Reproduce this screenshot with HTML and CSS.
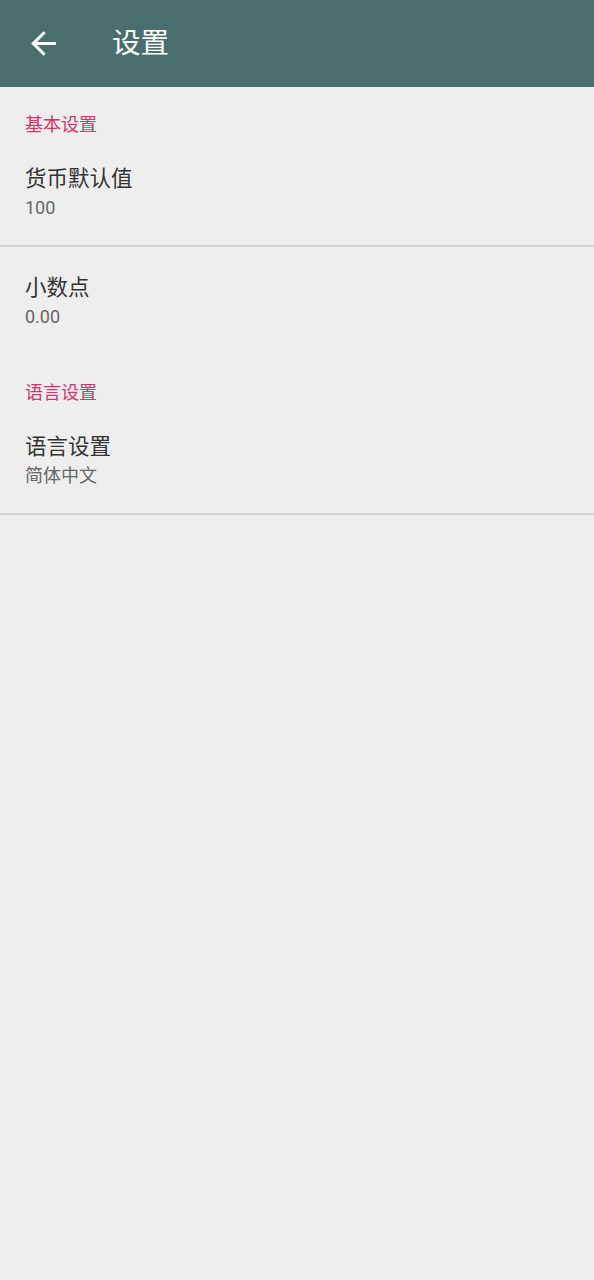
FILE: index.html
```html
<!DOCTYPE html>
<html lang="zh-CN">
<head>
<meta charset="utf-8">
<title>设置</title>
<link rel="stylesheet" href="styles.css">
</head>
<body>
<header class="toolbar">
  <svg class="back" viewBox="0 0 24 24" aria-hidden="true"><path d="M20 11H7.83l5.59-5.59L12 4l-8 8 8 8 1.41-1.41L7.83 13H20v-2z"/></svg>
  <h1 class="toolbar-title">设置</h1>
</header>
<main class="prefs">
  <section class="group">
    <div class="cat">基本设置</div>
    <div class="item">
      <div class="item-title">货币默认值</div>
      <div class="item-summary">100</div>
    </div>
    <div class="divider"></div>
    <div class="item">
      <div class="item-title">小数点</div>
      <div class="item-summary">0.00</div>
    </div>
  </section>
  <section class="group">
    <div class="cat">语言设置</div>
    <div class="item">
      <div class="item-title">语言设置</div>
      <div class="item-summary">简体中文</div>
    </div>
    <div class="divider"></div>
  </section>
</main>
</body>
</html>
```
FILE: styles.css
```css
html, body {
  margin: 0;
  padding: 0;
  background: #eeeeee;
  font-family: Roboto, "Noto Sans CJK SC", sans-serif;
}
body {
  min-height: 1280px;
}
.toolbar {
  height: 87px;
  background: #4a6e6d;
  display: flex;
  align-items: center;
  padding-left: 25px;
  box-sizing: border-box;
}
.back {
  width: 37px;
  height: 37px;
  fill: #ffffff;
  flex: none;
}
.toolbar-title {
  margin: 0 0 0 50px;
  font-size: 28.5px;
  font-weight: 400;
  color: #ffffff;
  line-height: 36px;
}
.group + .group {
  margin-top: 1px;
}
.cat {
  padding: 26px 25px 1px;
  font-size: 18px;
  line-height: 24px;
  color: #d6336c;
}
.item {
  padding: 27px 25px 25px;
}
.item-title {
  font-size: 21.5px;
  line-height: 28px;
  color: #333333;
}
.item-summary {
  margin-top: 3px;
  font-size: 18px;
  line-height: 24px;
  color: #666666;
}
.divider {
  height: 2px;
  background: #d4d4d4;
}
```
